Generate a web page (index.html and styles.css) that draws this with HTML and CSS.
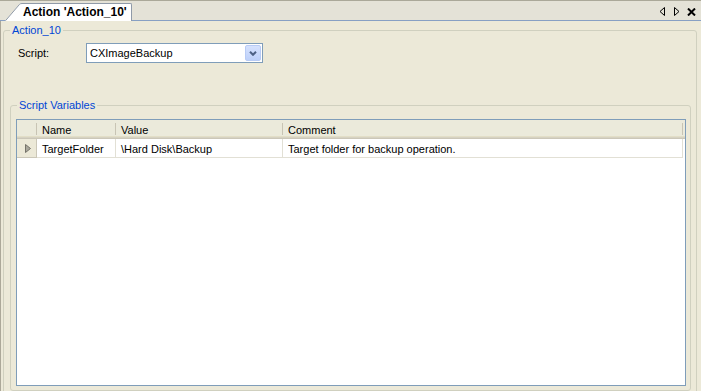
FILE: index.html
```html
<!DOCTYPE html>
<html>
<head>
<meta charset="utf-8">
<link rel="stylesheet" href="styles.css">
</head>
<body>
<div class="tabstrip">
  <div class="tab">
    <svg class="tab-slant" width="17" height="18" viewBox="0 0 17 18">
      <path d="M0 18 L14.5 1.2 Q15.3 0.5 17 0.5 L17 18 Z" fill="#ffffff"/>
      <path d="M0.6 17.6 L14.5 1.4 Q15.3 0.5 17 0.5" fill="none" stroke="#8f9aa8" stroke-width="1"/>
    </svg>
    <div class="tab-label">Action 'Action_10'</div>
  </div>
  <div class="tab-tools">
    <svg class="tool-prev" width="6" height="9" viewBox="0 0 6 9"><polygon points="5.5,0.5 1,4.5 5.5,8.5" fill="none" stroke="#000" stroke-width="1"/></svg>
    <svg class="tool-next" width="6" height="9" viewBox="0 0 6 9"><polygon points="0.5,0.5 5,4.5 0.5,8.5" fill="none" stroke="#000" stroke-width="1"/></svg>
    <svg class="tool-close" width="9" height="8" viewBox="0 0 9 8"><path d="M1 0.5 L8 7.5 M8 0.5 L1 7.5" stroke="#000" stroke-width="2"/></svg>
  </div>
</div>
<div class="content">
  <fieldset class="group group-action">
    <legend class="group-title">Action_10</legend>
    <div class="form-row">
      <span class="form-label">Script:</span>
      <div class="combo">
        <span class="combo-text">CXImageBackup</span>
        <span class="combo-btn"><svg width="8" height="5" viewBox="0 0 8 5"><polyline points="1,0.8 4,3.8 7,0.8" fill="none" stroke="#4d6185" stroke-width="2"/></svg></span>
      </div>
    </div>
    <fieldset class="group group-vars">
      <legend class="group-title">Script Variables</legend>
      <div class="grid">
        <div class="grid-head">
          <div class="hcell hcell-corner"></div>
          <div class="hcell">Name</div>
          <div class="hcell">Value</div>
          <div class="hcell">Comment</div>
          <div class="hcell hcell-fill"></div>
        </div>
        <div class="grid-row">
          <div class="rowhead"><svg width="6" height="9" viewBox="0 0 6 9"><polygon points="0.5,0.5 5.5,4.5 0.5,8.5" fill="#a9a79c" stroke="#75736a" stroke-width="1"/></svg></div>
          <div class="cell">TargetFolder</div>
          <div class="cell">\Hard Disk\Backup</div>
          <div class="cell">Target folder for backup operation.</div>
        </div>
      </div>
    </fieldset>
  </fieldset>
</div>
</body>
</html>
```

FILE: styles.css
```css
html, body {
  margin: 0;
  padding: 0;
}
body {
  background: #ece9d8;
  font-family: "Liberation Sans", Arial, sans-serif;
  font-size: 11px;
  color: #000;
  overflow: hidden;
  width: 701px;
  height: 391px;
}

/* ---------- tab strip ---------- */
.tabstrip {
  display: flex;
  height: 19px;
  background: #e4e2d7;
  border-top: 1px solid #aaa899;
  border-bottom: 1px solid #87a0c4;
}
.tab {
  display: flex;
  margin: 2px 0 -1px 5px;
  height: 18px;
}
.tab-slant {
  display: block;
  flex: none;
}
.tab-label {
  background: #ffffff;
  border-top: 1px solid #8f9aa8;
  border-right: 1px solid #8f9aa8;
  border-top-right-radius: 2px;
  padding: 1px 4px 0 1px;
  font-weight: bold;
  font-size: 12px;
  line-height: 14px;
  white-space: nowrap;
}
.tab-tools {
  margin-left: auto;
  display: flex;
  align-items: flex-start;
  padding: 6px 5px 0 0;
}
.tab-tools svg {
  display: block;
}
.tool-next {
  margin-left: 9px;
}
.tool-close {
  margin-left: 7px;
  margin-top: 1px;
}

/* ---------- content ---------- */
.content {
  box-sizing: border-box;
  height: 370px;
  border-left: 1px solid #aca899;
  padding: 0 4px 0 2px;
  overflow: hidden;
}
.group {
  border: 1px solid #d0d0bf;
  border-radius: 3px;
  margin: 0;
  padding: 0;
  min-width: 0;
}
.group-title {
  color: #0046d5;
  font-size: 11px;
  line-height: 13px;
  padding: 0 2px;
  margin-left: 6px;
}
.group-action {
  margin-top: 3px;
  padding-bottom: 20px;
}
.form-row {
  display: flex;
  align-items: center;
  margin-top: 6px;
  padding-left: 14px;
  height: 20px;
}
.form-label {
  width: 68px;
  flex: none;
}
.combo {
  box-sizing: border-box;
  display: flex;
  align-items: center;
  width: 177px;
  height: 20px;
  border: 1px solid #7f9db9;
  background: #fff;
}
.combo-text {
  flex: 1;
  padding-left: 3px;
}
.combo-btn {
  box-sizing: border-box;
  display: flex;
  align-items: center;
  justify-content: center;
  width: 16px;
  height: 16px;
  margin-right: 1px;
  border: 1px solid #b8cbf5;
  border-radius: 2px;
  background: linear-gradient(#d6e2fe, #bdd0f9);
}
.combo-btn svg {
  display: block;
  margin-top: 1px;
}

.group-vars {
  margin: 36px 5px 0 6px;
  padding-bottom: 4px;
}

/* ---------- grid ---------- */
.grid {
  box-sizing: border-box;
  margin: 7px 4px 0 5px;
  height: 267px;
  border: 1px solid #7f9db9;
  background: #ffffff;
}
.grid-head,
.grid-row {
  display: grid;
  grid-template-columns: 20px 79px 167px 400px 1fr;
}
.grid-head {
  height: 19px;
  background: linear-gradient(to bottom, #ebeadb 0, #ebeadb 16px, #e2dec7 16px, #e2dec7 17px, #d6d2c2 17px, #d6d2c2 18px, #cbc7b8 18px);
}
.hcell {
  padding: 2px 0 0 5px;
  line-height: 16px;
  white-space: nowrap;
  background: linear-gradient(#c8c4b4, #c8c4b4) no-repeat right 3px / 1px 12px;
}
.hcell-corner {
  padding: 0;
}
.hcell-fill {
  background: none;
}
.grid-row {
  height: 19px;
}
.rowhead {
  grid-column: 1;
  background: #ece9d8;
  border-right: 1px solid #cbc7b8;
  border-bottom: 1px solid #cbc7b8;
  display: flex;
  align-items: center;
  padding-left: 8px;
}
.rowhead svg {
  display: block;
}
.cell {
  padding: 2px 0 0 5px;
  line-height: 16px;
  white-space: nowrap;
  border-right: 1px solid #e2e0d5;
  border-bottom: 1px solid #e2e0d5;
}
```
